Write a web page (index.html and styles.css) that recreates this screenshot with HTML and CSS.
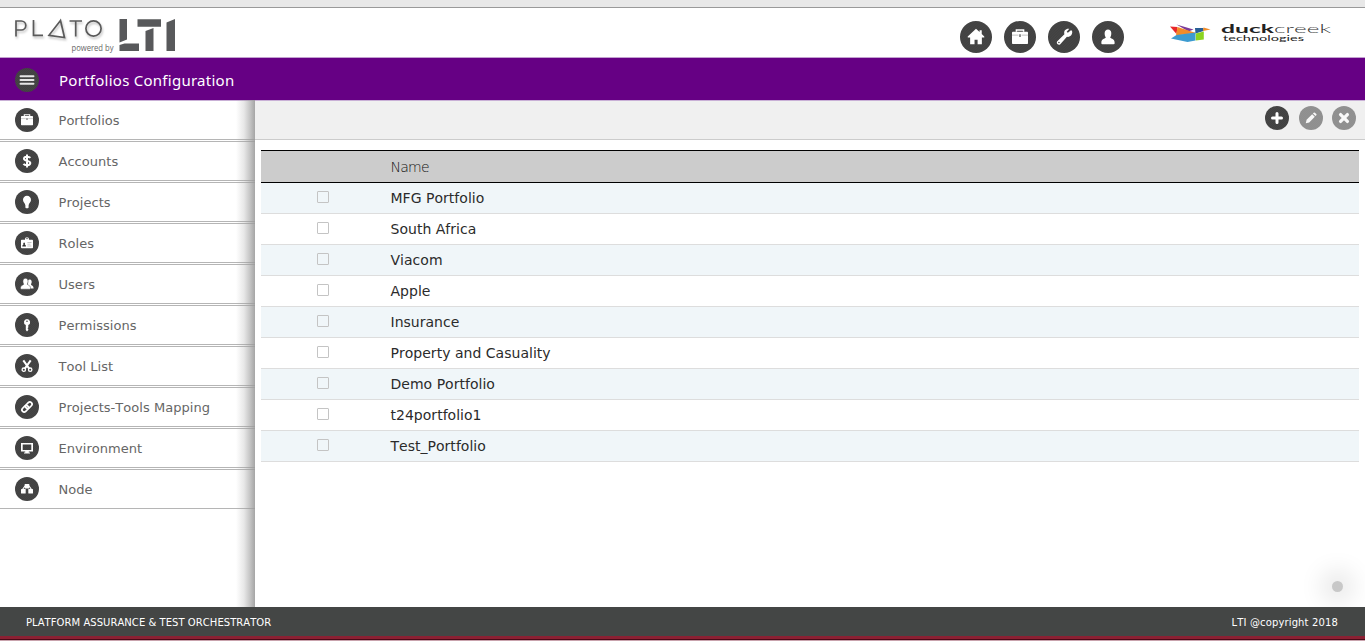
FILE: index.html
```html
<!DOCTYPE html>
<html lang="en">
<head>
<meta charset="utf-8">
<title>Portfolios Configuration</title>
<link rel="stylesheet" href="styles.css">
</head>
<body>
<svg class="defs" width="0" height="0">
  <defs>
    <pattern id="weave" width="2" height="2" patternUnits="userSpaceOnUse"><rect width="2" height="2" fill="#454545"/><path d="M0 2L2 0" stroke="#3d3d3d" stroke-width=".5"/></pattern>
    <symbol id="disc" viewBox="0 0 24 24"><circle cx="12" cy="12" r="12" fill="url(#weave)"/></symbol>
    <symbol id="case" viewBox="0 0 24 24"><path d="M9.3 8V6.8h5.4V8" fill="none" stroke="#fff" stroke-width="1.1"/><rect x="6" y="8" width="12" height="9.2" rx=".6"/><path d="M6 10.6h4.800M13.200 10.600H18" stroke="#888" stroke-width=".4"/><path d="M12 10v2" stroke="#454545" stroke-width=".9"/></symbol>
    <symbol id="dollar" viewBox="0 0 24 24"><path d="M15.3 8.9C14.4 7.5 9 7 9 9.8c0 2.7 6.3 1.4 6.3 4.2 0 2.9-5.500 2.600-6.800.8M12 5.500v13" fill="none" stroke="#fff" stroke-width="2"/></symbol>
    <symbol id="bulb" viewBox="0 0 24 24"><path d="M12 5.800a4 4 0 0 0-4 4.100c0 2.200 2.300 3.100 2.400 5.500v2a.9.900 0 0 0 .9.800h1.400a.9.900 0 0 0 .9-.8v-2c.1-2.400 2.400-3.300 2.400-5.500a4 4 0 0 0-4-4.100z"/></symbol>
    <symbol id="badge" viewBox="0 0 24 24"><path d="M6.800 8.800H10c-.5-3.300 4.500-3.300 4 0h3.200q.8 0 .8.800v6.800q0 .8-.8.800H6.800q-.8 0-.8-.8V9.600q0-.8.8-.8z"/><circle cx="12" cy="7.500" r=".7" fill="#454545"/><path d="M7.300 15.500c0-1.600.9-1.500 1.200-1.900-1.100-2.800 2.400-2.800 1.300 0 .3.400 1.200.3 1.200 1.900z" fill="#333"/><path d="M12.400 11.500H16.500M12.400 13.200h3M12.400 15h4" stroke="#888" stroke-width=".5"/></symbol>
    <symbol id="person" viewBox="0 0 24 24"><path d="M7 16.600c0-3.400 2.300-3 3.400-4.200C9 10.300 9 6.300 12 6.300s3 4 1.600 6.100c1.100 1.200 3.400.8 3.400 4.200q0 .8-.8.800H7.800q-.8 0-.8-.8z"/></symbol>
    <symbol id="users" viewBox="0 0 24 24"><path d="M12.500 16.500h6.100c0-3.300-2.100-3-2.700-4.100 1.500-2.200.9-4.900-1.300-4.900-1.500 0-2.200 1.500-1.700 3.500z"/><path d="M5.500 16.400c0-3.400 2.300-2.800 3.200-4.200C7.300 9.500 7.900 6.300 10.500 6.300s3.200 3.200 1.800 5.900c.9 1.400 3.200.8 3.200 4.200q0 .8-.8.800H6.300q-.8 0-.8-.8z" stroke="#454545" stroke-width=".5"/></symbol>
    <symbol id="key" viewBox="0 0 24 24"><path fill-rule="evenodd" d="M12 6a3.200 3.200 0 0 0-1.200 6.100v5l1.200 1.300 1.300-1.300V16l-.8-.8.8-.8v-2.300A3.200 3.200 0 0 0 12 6zm0 1.500a.8.800 0 1 1 0 1.600.8.800 0 0 1 0-1.600z"/></symbol>
    <symbol id="scissors" viewBox="0 0 24 24"><g fill="none" stroke="#fff"><path d="M8.300 6.300l5.900 8.300M15.700 6.300l-5.900 8.300" stroke-width="2"/><circle cx="8.800" cy="15.700" r="1.700" stroke-width="1.300"/><circle cx="15.200" cy="15.700" r="1.700" stroke-width="1.300"/></g></symbol>
    <symbol id="link" viewBox="0 0 24 24"><g transform="rotate(-45 12 12)" fill="none" stroke="#fff" stroke-width="1.700"><rect x="5.800" y="9.800" width="7.400" height="4.400" rx="2.200"/><rect x="10.800" y="9.800" width="7.400" height="4.400" rx="2.200"/></g></symbol>
    <symbol id="screen" viewBox="0 0 24 24"><path fill-rule="evenodd" d="M6 7h12v8.500h-4.200v.9H15v1.100H9v-1.100h1.200v-.9H6zm1.700 1.500V14h8.600V8.500z"/></symbol>
    <symbol id="nodes" viewBox="0 0 24 24"><path d="M7.500 12.500L10 9h4l2.500 3.500" fill="none" stroke="#fff" stroke-width="1.200"/><rect x="9.700" y="7" width="4.600" height="4.500" rx=".5"/><rect x="6" y="12" width="4.700" height="4.400" rx=".5"/><rect x="13.300" y="12" width="4.700" height="4.400" rx=".5"/></symbol>
    <symbol id="home" viewBox="0 0 24 24"><path d="M12 5.800l2.700 2.500V7h1.600v2.800l1.900 1.900v.7h-1.800v5.100H13.200v-3.400h-2.300v3.400H7.600v-5.100H5.800v-.7z"/></symbol>
    <symbol id="wrench" viewBox="0 0 24 24"><path fill-rule="evenodd" d="M17.200 6.900l-2.300 2-.9-.9 2-2.100c-2.600-.4-4.400 1.500-3.700 4L7 15.200c-1.200 1.500.7 3.400 2.200 2.200l5-5.500c2.600.5 4.600-2 3.800-4.500zM8.200 15.500a.6.600 0 1 1 0 1.200.6.600 0 0 1 0-1.200z"/></symbol>
    <symbol id="menu" viewBox="0 0 24 24"><path d="M5.500 8.300h13M5.500 12h13M5.500 15.700h13" stroke="#e6e6e6" stroke-width="1.900" stroke-linecap="round"/></symbol>
    <symbol id="plus" viewBox="0 0 24 24"><path d="M12 7.500v9M7.500 12h9" stroke="#fff" stroke-width="3" stroke-linecap="round"/></symbol>
    <symbol id="pencil" viewBox="0 0 24 24"><path d="M6.800 17.200l.8-3.400 5.600-5.600 2.600 2.600-5.600 5.600zM13.900 7.500l.8-.8q.6-.6 1.200 0l1.400 1.400q.6.600 0 1.200l-.8.800z"/></symbol>
    <symbol id="cross" viewBox="0 0 24 24"><path d="M8.600 8.600l6.800 6.800M15.400 8.600l-6.800 6.800" stroke="#fff" stroke-width="3.300" stroke-linecap="round"/></symbol>
  </defs>
</svg>
<div class="page">
  <div class="strip"></div>
  <header class="header">
    <svg class="brand" width="190" height="49" viewBox="0 8 190 49">
      <g class="plato" fill="none" stroke="#5a5a5a" stroke-width="1.700">
        <path d="M16 36.500V21h5.300a4.500 4.500 0 0 1 0 9H16M33.500 20v15.300h9.500M60.500 20.500L49 35.300l15.500 2.200zM69.500 21h12.500M75.700 21v15.500"/>
        <circle cx="93.500" cy="28.500" r="7.600"/>
      </g>
      <text x="71.500" y="51" textLength="42" lengthAdjust="spacingAndGlyphs" class="powered">powered by</text>
      <path fill="#58595b" d="M119.500 19h7.500v20.500l-7.500 3zM119.500 45l5-1.500H139V51h-19.500zM137.500 19.200H161v7.500h-23.500zM145.500 31l8-3v23h-8zM166.500 22.500l8.500-3.500v32h-8.500z"/>
    </svg>
    <div class="header-side">
      <nav class="shortcuts">
        <svg class="big"><use href="#disc"/><use href="#home"/></svg>
        <svg class="big"><use href="#disc"/><use href="#case"/></svg>
        <svg class="big"><use href="#disc"/><use href="#wrench"/></svg>
        <svg class="big"><use href="#disc"/><use href="#person"/></svg>
      </nav>
      <svg class="duck" width="165" height="30" viewBox="1168 18 165 30">
        <path fill="#7d3c98" d="M1176.500 24.500l17 5-5 2z"/>
        <path fill="#e8282b" d="M1170 26.500l7.500.5-1 7z"/>
        <path fill="#f28c28" d="M1177.500 27l18.500 6-20 2.500z"/>
        <path fill="#3c9bd0" d="M1171 38.500l5.500-3.500 19-2.500v8l-8 1.500z"/>
        <path fill="#285f96" d="M1195 28h8.500v3l-8 2.500z"/>
        <path fill="#f28c28" d="M1203.500 27.500l7 2-7.500 1.500z"/>
        <path fill="#8bd320" d="M1195.800 33.500l8-2v8l-8 1z"/>
        <text x="1221" y="33" textLength="53" lengthAdjust="spacingAndGlyphs" class="duck-a">duck</text>
        <text x="1274" y="33" textLength="57" lengthAdjust="spacingAndGlyphs" class="duck-b">creek</text>
        <text x="1223" y="41" textLength="81" lengthAdjust="spacingAndGlyphs" class="duck-c">technologies</text>
      </svg>
    </div>
  </header>
  <div class="titlebar">
    <svg class="small"><use href="#disc"/><use href="#menu"/></svg>
    <h1 class="title">Portfolios Configuration</h1>
  </div>
  <div class="body">
    <nav class="sidebar">
      <a class="item"><svg class="small"><use href="#disc"/><use href="#case"/></svg><span>Portfolios</span></a>
      <a class="item"><svg class="small"><use href="#disc"/><use href="#dollar"/></svg><span>Accounts</span></a>
      <a class="item"><svg class="small"><use href="#disc"/><use href="#bulb"/></svg><span>Projects</span></a>
      <a class="item"><svg class="small"><use href="#disc"/><use href="#badge"/></svg><span>Roles</span></a>
      <a class="item"><svg class="small"><use href="#disc"/><use href="#users"/></svg><span>Users</span></a>
      <a class="item"><svg class="small"><use href="#disc"/><use href="#key"/></svg><span>Permissions</span></a>
      <a class="item"><svg class="small"><use href="#disc"/><use href="#scissors"/></svg><span>Tool List</span></a>
      <a class="item"><svg class="small"><use href="#disc"/><use href="#link"/></svg><span>Projects-Tools Mapping</span></a>
      <a class="item"><svg class="small"><use href="#disc"/><use href="#screen"/></svg><span>Environment</span></a>
      <a class="item"><svg class="small"><use href="#disc"/><use href="#nodes"/></svg><span>Node</span></a>
    </nav>
    <main class="content">
      <div class="toolbar">
        <svg class="small"><use href="#disc"/><use href="#plus"/></svg>
        <svg class="small off"><use href="#disc"/><use href="#pencil"/></svg>
        <svg class="small off last"><use href="#disc"/><use href="#cross"/></svg>
      </div>
      <div class="table">
        <div class="thead">Name</div>
        <div class="row"><i class="box"></i><span>MFG Portfolio</span></div>
        <div class="row"><i class="box"></i><span>South Africa</span></div>
        <div class="row"><i class="box"></i><span>Viacom</span></div>
        <div class="row"><i class="box"></i><span>Apple</span></div>
        <div class="row"><i class="box"></i><span>Insurance</span></div>
        <div class="row"><i class="box"></i><span>Property and Casuality</span></div>
        <div class="row"><i class="box"></i><span>Demo Portfolio</span></div>
        <div class="row"><i class="box"></i><span>t24portfolio1</span></div>
        <div class="row"><i class="box"></i><span>Test_Portfolio</span></div>
      </div>
      <div class="bubble"></div>
    </main>
  </div>
  <footer class="footer"><span class="foot-l">PLATFORM ASSURANCE &amp; TEST ORCHESTRATOR</span><span class="foot-r">LTI @copyright 2018</span></footer>
  <div class="edge"></div>
</div>
</body>
</html>
```
FILE: styles.css
```css
* { box-sizing: border-box; }
body { margin: 0; background: #fff; font-family: "DejaVu Sans", Verdana, sans-serif; font-kerning: none; overflow: hidden; }
svg { display: block; fill: #fff; flex: none; }
.defs { position: absolute; }
.page { display: flex; flex-direction: column; width: 1365px; height: 641px; }
.strip { height: 8px; background: #e8e8e8; border-bottom: 1px solid #999; }
.header { height: 49px; display: flex; justify-content: space-between; }
.header-side { display: flex; padding: 10px 32px 0 0; gap: 44px; }
.shortcuts { display: flex; gap: 12px; padding-top: 3px; }
.big { width: 32px; height: 32px; }
.small { width: 24px; height: 24px; }
.plato { filter: drop-shadow(1px 2px 1px rgba(0,0,0,.25)); }
.powered { font-family: "Open Sans", sans-serif; font-size: 8.5px; fill: #666; }
.duck text { font-family: Lato, sans-serif; }
.duck .duck-a { font-weight: 700; font-size: 12px; fill: #222; }
.duck .duck-b { font-weight: 300; font-size: 12px; fill: #333; }
.duck .duck-c { font-size: 7.5px; fill: #222; }
.titlebar { height: 43px; background: #660084; border-top: 1px solid #c3a1d0; display: flex; align-items: center; padding: 2px 0 0 15px; gap: 20px; }
.title { margin: 0; font: 400 15px "Noto Sans", sans-serif; color: #fff; letter-spacing: .26px; }
.body { height: 507px; display: flex; }
.sidebar { width: 255px; display: flex; flex-direction: column; gap: 1px; position: relative; }
.sidebar::after { content: ""; position: absolute; top: 0; right: 0; bottom: 0; width: 19px; background: linear-gradient(90deg, rgba(153,153,153,0), rgba(160,160,160,.25) 42%, rgba(155,155,155,.6) 75%, rgba(155,155,155,.9)); }
.item { height: 40px; border-top: 1px solid #b5b5b5; border-bottom: 1px solid #b5b5b5; display: flex; align-items: center; padding-left: 15px; gap: 20px; font-size: 13px; color: #666; letter-spacing: .04px; }
.item span { margin-left: -.5px; }
.item:first-child { border-top-color: #c9b0d6; }
.content { flex: 1; position: relative; }
.toolbar { height: 40px; background: #f0f0f0; border-top: 1px solid #c9b0d6; border-bottom: 1px solid #ccc; display: flex; justify-content: flex-end; gap: 10px; padding: 5px 9px 0 0; }
.off { opacity: .55; }
.last { margin-left: -1px; }
.table { margin: 10px 6px 0; font-size: 14px; color: #2b2b2b; }
.thead { height: 33px; background: #ccc; border-top: 1px solid #000; border-bottom: 1px solid #000; padding-left: 129.5px; line-height: 32px; font-family: "DejaVu Sans Light", "DejaVu Sans", sans-serif; font-weight: 200; color: #111; letter-spacing: -.75px; }
.row { height: 31px; border-bottom: 1px solid #ddd; display: flex; padding-left: 56px; }
.row:nth-child(even) { background: #f0f6f9; }
.row span { line-height: 31px; letter-spacing: .02px; }
.box { width: 12px; height: 12px; margin: 8px 61.5px 0 0; border: 1px solid #c4c4c4; border-radius: 1px; }
.bubble { position: absolute; right: 22px; bottom: 15px; width: 11px; height: 11px; border-radius: 50%; background: #c8c8c8; box-shadow: 0 0 24px 10px rgba(0,0,0,.1); }
.footer { height: 29px; background: #444645; color: #fff; display: flex; justify-content: space-between; align-items: center; padding: 2px 27px 0 26px; font-size: 10px; position: relative; }
.foot-l { letter-spacing: .05px; }
.foot-r { letter-spacing: .14px; }
.edge { height: 5px; background: linear-gradient(#8c2033 0 3px, #4a0a18 3px 4px, #c9a3ad 4px); }
```
